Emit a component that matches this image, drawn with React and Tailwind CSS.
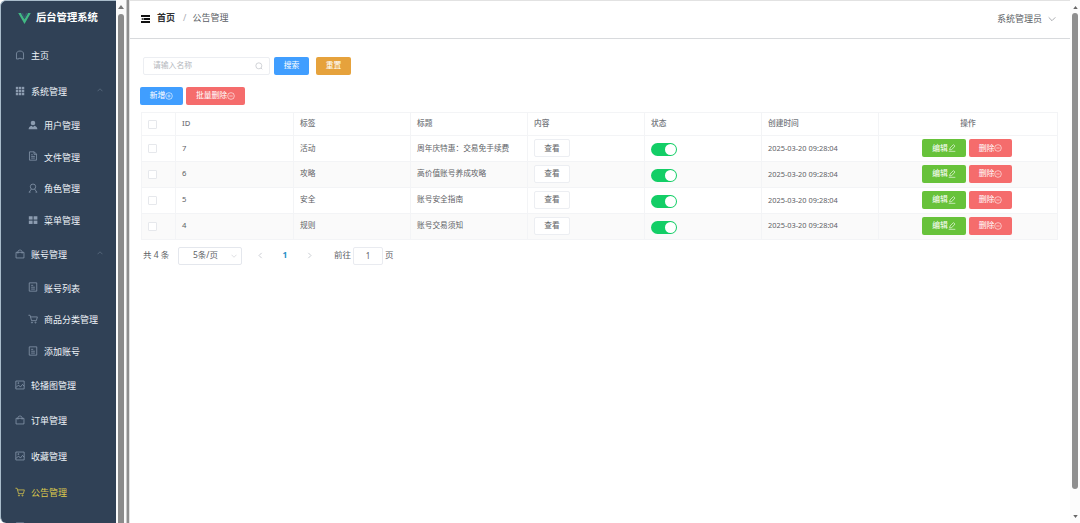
import React, { useState } from 'react';

// Thin outline icons used by the menu and the buttons, all on a 24 grid
const Icon = ({ name, className = '', strokeWidth = 1.8 }) => {
  const shapes = {
    home: <path d="M3.5 21.5V9.5C3.5 5 7 2.5 12 2.5s8.500 2.500 8.500 7v12h-5.500v-1.500h-6v1.500z" />,
    grid: (
      <g fill="currentColor" stroke="none">
        {[2, 9.2, 16.4].map(y =>
          [2, 9.2, 16.4].map(x => <rect key={`${x}-${y}`} x={x} y={y} width="5.8" height="5.8" />)
        )}
      </g>
    ),
    user: (
      <g fill="currentColor" stroke="none">
        <circle cx="12" cy="7" r="5.5" />
        <path d="M1.500 22c0-5 3-7.500 7-8.500l3.500 3 3.500-3c4 1 7 3.500 7 8.500z" />
      </g>
    ),
    file: <path d="M3.500 2h11.500l5.500 5.500V22h-17zM14.500 2v6h6M7.500 9h4M7.500 13h9M7.500 17h9" />,
    role: (
      <>
        <circle cx="12" cy="9" r="6.5" />
        <path d="M8 14.500L3 22M16 14.500L21 22M2 22h4M18 22h4" />
      </>
    ),
    menu: (
      <g fill="currentColor" stroke="none">
        <rect x="2" y="3" width="9" height="8" />
        <rect x="13.500" y="3" width="9" height="8" />
        <rect x="2" y="13.500" width="9" height="8" />
        <rect x="13.500" y="13.500" width="9" height="8" />
      </g>
    ),
    bag: <path d="M2.500 8h19v13.500h-19zM7 11V6.500c0-5.300 10-5.300 10 0V11" />,
    list: <path d="M3 2h18v20H3zM7.500 8h5M7.500 12.500h9M7.500 17h9" />,
    cart: (
      <>
        <path d="M1 3h4l3.500 13h11.500L22.500 7H6" />
        <circle cx="9.500" cy="20.500" r="1.300" />
        <circle cx="18" cy="20.500" r="1.300" />
      </>
    ),
    picture: (
      <>
        <path d="M2 2.500h20v19H2zM2.500 18l6-6 4.500 5 5-6.500 4 4.500" />
        <circle cx="8" cy="7.500" r="1.200" />
      </>
    ),
    search: (
      <>
        <circle cx="11.500" cy="11.500" r="9" />
        <path d="M18 18l4 4" />
      </>
    ),
    plus: (
      <>
        <circle cx="12" cy="12" r="10" />
        <path d="M12 7v10M7 12h10" />
      </>
    ),
    remove: (
      <>
        <circle cx="12" cy="12" r="10" />
        <path d="M7 12h10" />
      </>
    ),
    edit: <path d="M5 18l1-6L16 2l5 4-10 11zM2 22h20" />,
    up: <path d="M2 17L12 7l10 10" />,
    down: <path d="M2 7l10 10L22 7" />,
    left: <path d="M16 3L7 12l9 9" />,
    right: <path d="M8 3l9 9-9 9" />,
  };
  return (
    <svg viewBox="0 0 24 24" className={`shrink-0 ${className}`} fill="none" stroke="currentColor" strokeWidth={strokeWidth}>
      {shapes[name]}
    </svg>
  );
};

const menu = [
  { title: '主页', icon: 'home' },
  {
    title: '系统管理',
    icon: 'grid',
    children: [
      { title: '用户管理', icon: 'user' },
      { title: '文件管理', icon: 'file' },
      { title: '角色管理', icon: 'role' },
      { title: '菜单管理', icon: 'menu' },
    ],
  },
  {
    title: '账号管理',
    icon: 'bag',
    children: [
      { title: '账号列表', icon: 'list' },
      { title: '商品分类管理', icon: 'cart' },
      { title: '添加账号', icon: 'list' },
    ],
  },
  { title: '轮播图管理', icon: 'picture' },
  { title: '订单管理', icon: 'bag' },
  { title: '收藏管理', icon: 'picture' },
  { title: '公告管理', icon: 'cart', active: true },
  { title: '', icon: 'list' },
];

const notices = [
  { id: 7, tag: '活动', title: '周年庆特惠：交易免手续费', createTime: '2025-03-20 09:28:04' },
  { id: 6, tag: '攻略', title: '高价值账号养成攻略', createTime: '2025-03-20 09:28:04' },
  { id: 5, tag: '安全', title: '账号安全指南', createTime: '2025-03-20 09:28:04' },
  { id: 4, tag: '规则', title: '账号交易须知', createTime: '2025-03-20 09:28:04' },
];

const Sidebar = () => (
  <aside className="flex h-full w-[116px] shrink-0 flex-col overflow-hidden rounded-l-[6px] border-t border-l border-[#a9bccb] bg-[#304156] text-[9px] text-[#eef3f8]">
    <div className="flex h-[37.4px] shrink-0 items-center pb-[3px] pl-[17px]">
      <svg viewBox="0 0 24 21" className="h-[11px] w-[13px]">
        <path d="M0 0h5l7 12 7-12h5L12 21z" fill="#41b883" />
        <path d="M5 0h4l3 5.500L15 0h4l-7 12z" fill="#35596b" />
      </svg>
      <span className="ml-[5px] text-[10.3px] font-bold whitespace-nowrap text-white">后台管理系统</span>
    </div>
    {menu.map((item, i) => (
      <div key={i} className="shrink-0">
        <div className={`flex h-[35.7px] items-center pl-[14px] ${item.active ? 'text-[#dcc94c]' : ''}`}>
          <Icon name={item.icon} className={`mb-[2px] h-[10px] w-[10px] ${item.active ? '' : 'text-[#8c9cb0]'}`} />
          <span className="ml-[6px] flex-1 whitespace-nowrap">{item.title}</span>
          {item.children && <Icon name="up" className="mr-[13px] mb-[3px] h-[6px] w-[6px] text-[#7f8fa3]" />}
        </div>
        {item.children?.map(child => (
          <div key={child.title} className="flex h-[31.75px] items-center pl-[27px]">
            <Icon name={child.icon} className="mb-[2px] h-[10px] w-[10px] text-[#8c9cb0]" />
            <span className="ml-[6px] whitespace-nowrap">{child.title}</span>
          </div>
        ))}
      </div>
    ))}
  </aside>
);

const Button = ({ className, icon, children }) => (
  <button className={`flex h-[18px] shrink-0 items-center justify-center rounded-[2px] text-[7.8px] leading-none whitespace-nowrap text-white ${className}`}>
    {children}
    {icon && <Icon name={icon} className="h-[8px] w-[8px]" />}
  </button>
);

const Switch = () => {
  const [on, setOn] = useState(true);
  return (
    <button
      onClick={() => setOn(!on)}
      className={`mt-[2px] flex h-[13px] w-[26px] items-center rounded-full px-[1px] ${on ? 'justify-end bg-[#13ce66]' : 'bg-[#dcdfe6]'}`}
    >
      <span className="h-[11px] w-[11px] rounded-full bg-white" />
    </button>
  );
};

const Checkbox = () => <span className="block h-[9px] w-[9px] rounded-[1px] border border-[#e6e8ec] bg-white" />;

const NoticeTable = () => (
  <table className="mt-[6px] w-[916px] table-fixed border-collapse text-[7.7px] leading-none text-[#606266]">
    <colgroup>
      <col className="w-[34px]" />
      <col className="w-[118px]" />
      <col className="w-[117px]" />
      <col className="w-[117px]" />
      <col className="w-[117px]" />
      <col className="w-[117px]" />
      <col className="w-[117px]" />
      <col className="w-[179px]" />
    </colgroup>
    <thead>
      <tr className="h-[23px] text-left text-[#73767c] *:border *:border-[#f3f4f6] *:px-[6px] *:font-medium">
        <th><Checkbox /></th>
        <th>ID</th>
        <th>标签</th>
        <th>标题</th>
        <th>内容</th>
        <th>状态</th>
        <th>创建时间</th>
        <th className="text-center">操作</th>
      </tr>
    </thead>
    <tbody>
      {notices.map(row => (
        <tr key={row.id} className="h-[25.9px] *:border *:border-[#f3f4f6] *:px-[6px] *:py-0 even:bg-[#fafafa]">
          <td><Checkbox /></td>
          <td>{row.id}</td>
          <td>{row.tag}</td>
          <td className="whitespace-nowrap">{row.title}</td>
          <td>
            <button className="flex h-[18px] w-[36px] items-center justify-center rounded-[2px] border border-[#eceef2] bg-white leading-none">
              查看
            </button>
          </td>
          <td><Switch /></td>
          <td className="text-[7.4px] whitespace-nowrap">{row.createTime}</td>
          <td>
            <div className="flex justify-center gap-[3px] pr-[2px]">
              <Button className="w-[44px] bg-[#67c23a]" icon="edit">编辑</Button>
              <Button className="w-[43px] bg-[#f56c6c]" icon="remove">删除</Button>
            </div>
          </td>
        </tr>
      ))}
    </tbody>
  </table>
);

const Pagination = () => (
  <div className="mt-[7px] flex h-[18px] items-center pl-[2px] text-[8.500px] leading-none whitespace-nowrap text-[#606266]">
    <span className="w-[35px]">共 4 条</span>
    <div className="flex h-[18px] w-[64px] items-center justify-between rounded-[2px] border border-[#e4e7ed] pr-[4px] pl-[14px]">
      5条/页
      <Icon name="down" className="h-[6px] w-[6px] text-[#b4b8bf]" />
    </div>
    <Icon name="left" strokeWidth={2.5} className="ml-[15px] h-[7px] w-[7px] text-[#b8bcc4]" />
    <span className="w-[42px] text-center font-bold text-[#2b8fc7]">1</span>
    <Icon name="right" strokeWidth={2.5} className="h-[7px] w-[7px] text-[#b8bcc4]" />
    <span className="ml-[21px]">前往</span>
    <span className="mx-[2px] flex h-[18px] w-[30px] items-center justify-center rounded-[2px] border border-[#e9ebf0] text-[8px]">1</span>
    <span>页</span>
  </div>
);

const Header = () => (
  <header className="flex h-[38px] shrink-0 items-center border-b border-[#d8dadd] pr-[14px] pb-[3px] pl-[11px] text-[9px] text-[#5c5f66]">
    <svg viewBox="0 0 18 16" className="mt-px h-[8px] w-[9px]" fill="#111">
      <path d="M0 0h18v4H0zM5 6h13v4H5zM0 12h18v4H0zM0 8l4-2v4z" />
    </svg>
    <span className="ml-[7px] font-bold text-[#303133]">首页</span>
    <span className="mr-[6px] ml-[8px] text-[#a8abb2]">/</span>
    <span>公告管理</span>
    <div className="ml-auto flex items-center pt-[2px]">
      系统管理员
      <Icon name="down" className="ml-[6px] h-[8px] w-[8px] text-[#73767c]" />
    </div>
  </header>
);

export default function App() {
  return (
    <div className="flex h-[523px] w-[1080px] overflow-hidden bg-white font-['Noto_Sans','Noto_Sans_CJK_SC',sans-serif]" lang="zh-CN">
      <Sidebar />
      <div className="flex w-[10px] shrink-0 flex-col items-center bg-[#fafafa]">
        <svg viewBox="0 0 6 4" className="mt-[5px] h-[4px] w-[6px]" fill="#777"><path d="M0 4l3-4 3 4z" /></svg>
        <div className="mt-[5px] w-[6px] flex-1 rounded-t-full bg-[#8b8b8b]" />
      </div>
      <div className="w-[4px] shrink-0 border-r border-l border-r-[#e2e2e2] border-l-[#c8c8c8] bg-[#8f8f8f]" />
      <main className="flex min-w-0 flex-1 flex-col border-t border-[#e2e2e2]">
        <Header />
        <div className="pt-[18px] pl-[11px]">
          <div className="flex items-center pl-[2px]">
            <div className="flex h-[18px] w-[127px] items-center justify-between rounded-[2px] border border-[#eceef2] pr-[6px] pl-[9px] text-[7.8px] leading-none text-[#b4b7bd]">
              请输入名称
              <Icon name="search" className="h-[8px] w-[8px]" />
            </div>
            <Button className="ml-[4px] w-[35px] bg-[#409eff]">搜索</Button>
            <Button className="ml-[7px] w-[35px] bg-[#e6a23c]">重置</Button>
          </div>
          <div className="-ml-px mt-[12px] flex gap-[3px]">
            <Button className="w-[43px] bg-[#409eff]" icon="plus">新增</Button>
            <Button className="w-[59px] bg-[#f56c6c]" icon="remove">批量删除</Button>
          </div>
          <div className="pt-px">
            <NoticeTable />
          </div>
          <Pagination />
        </div>
      </main>
      <div className="flex w-[10px] shrink-0 flex-col items-center bg-[#fcfcfc]">
        <svg viewBox="0 0 6 4" className="mt-[6px] h-[3px] w-[5px]" fill="#666"><path d="M0 4l3-4 3 4z" /></svg>
        <div className="mt-[4px] h-[476px] w-[6px] rounded-full bg-[#8f8f8f]" />
        <svg viewBox="0 0 6 4" className="mt-auto mb-[5px] h-[3px] w-[5px]" fill="#666"><path d="M0 0l3 4 3-4z" /></svg>
      </div>
    </div>
  );
}
